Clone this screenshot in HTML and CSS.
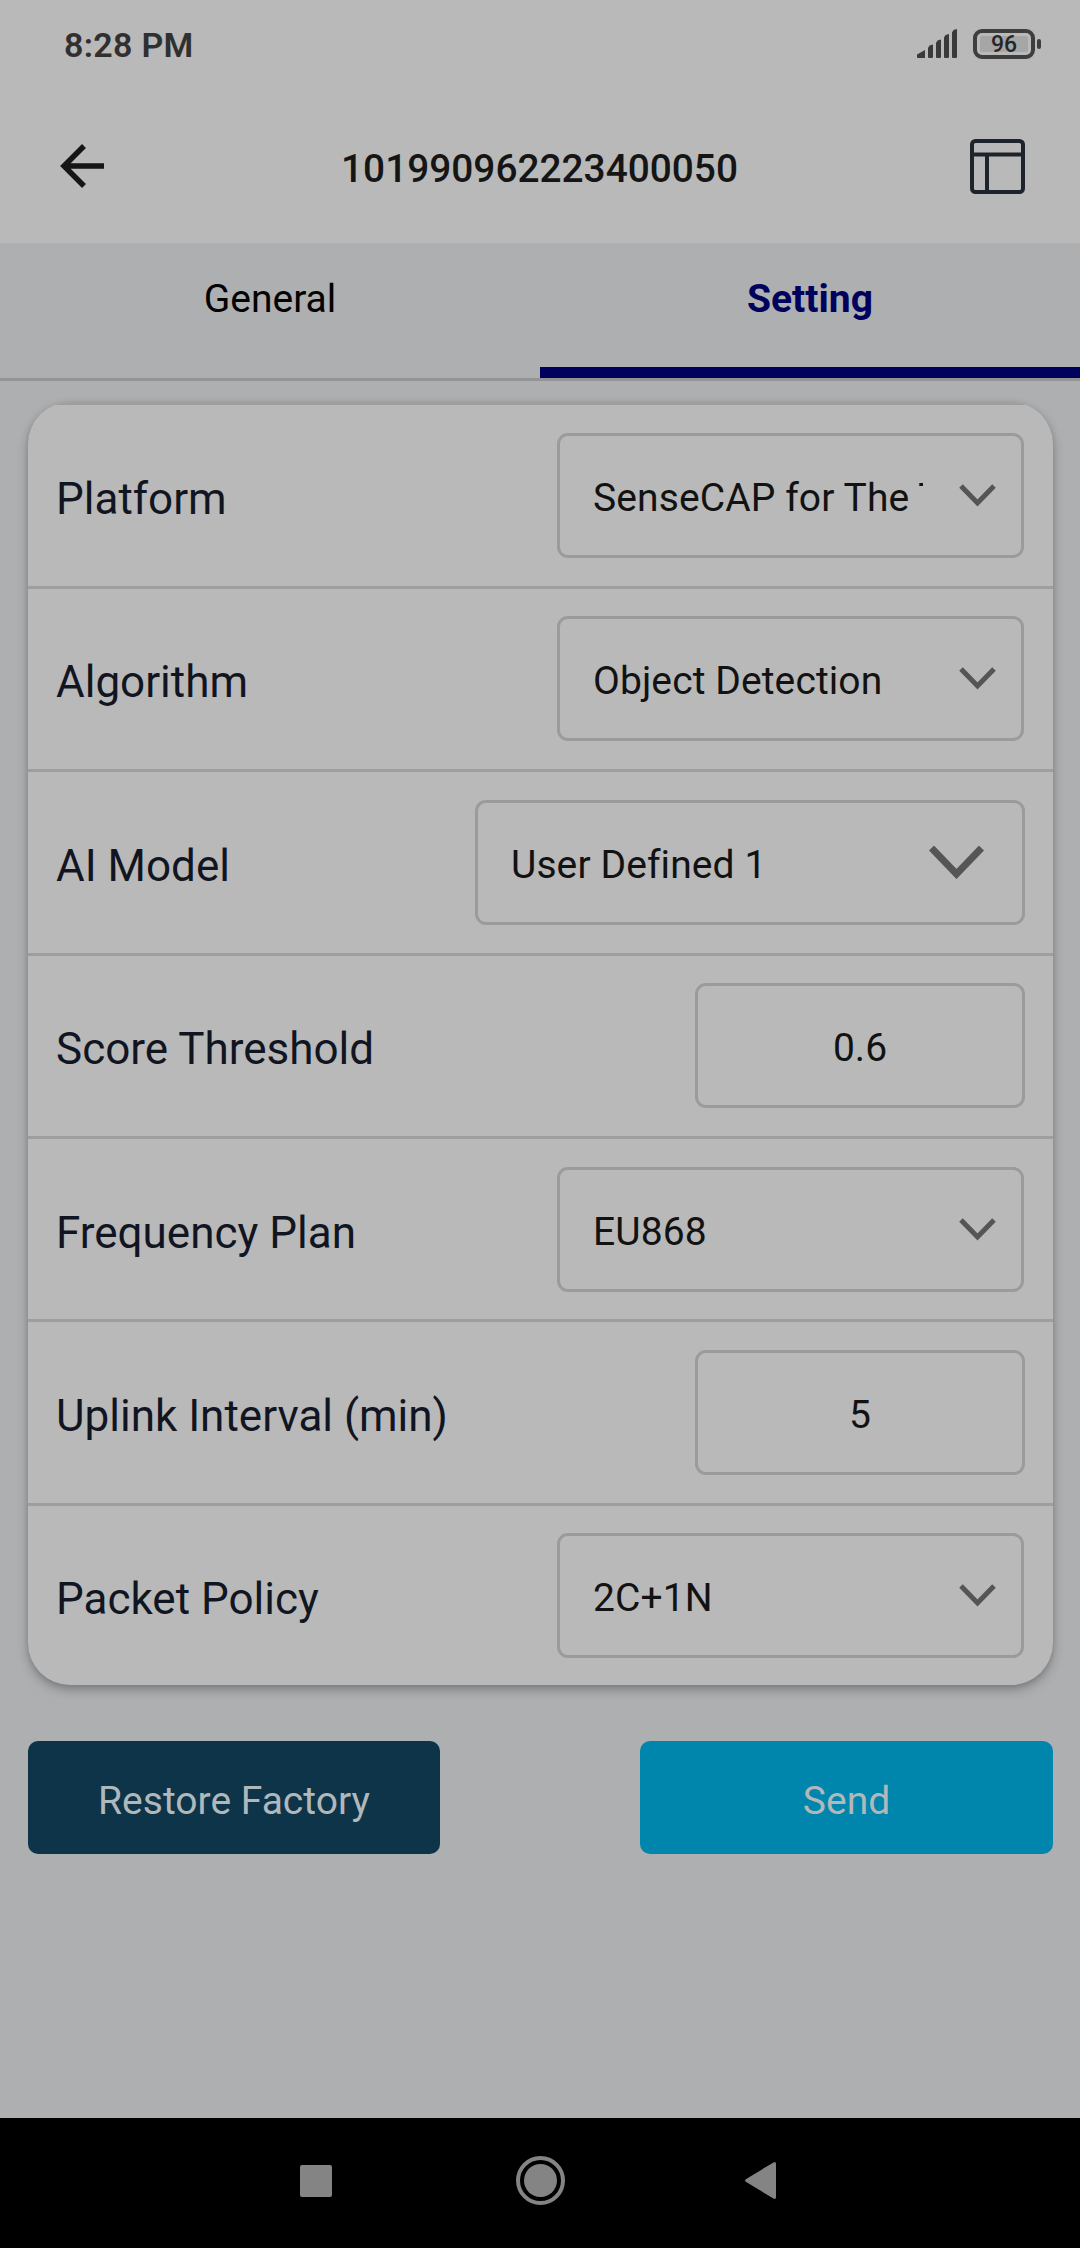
FILE: index.html
```html
<!DOCTYPE html>
<html lang="en">
<head>
<meta charset="utf-8">
<title>Device settings</title>
<link rel="stylesheet" href="styles.css">
</head>
<body>
<div class="status">
  <span class="clock">8:28 PM</span>
  <div class="status-icons">
    <svg width="40" height="30" viewBox="0 0 40 30" fill="#3a3a3a"><path d="M0 25.500 8 21v8H1a1 1 0 0 1-1-1zM11 19l1.500-2.500L16 15.500V28a1 1 0 0 1-1 1h-3a1 1 0 0 1-1-1zM19 14l1.500-2.500L24 10.500V28a1 1 0 0 1-1 1h-3a1 1 0 0 1-1-1zM27 8.500 28.500 6 32 5v23a1 1 0 0 1-1 1h-3a1 1 0 0 1-1-1zM35 3.500 36.500 1 40 0v28a1 1 0 0 1-1 1h-3a1 1 0 0 1-1-1z"/></svg>
    <div class="battery"><div class="cell"><span class="level">96</span></div><i class="nub"></i></div>
  </div>
</div>
<header class="header">
  <svg class="back" width="44" height="44" viewBox="0 0 44 44" fill="none" stroke="#151515" stroke-width="5.500"><path d="M24 2 4 22l20 20M4 22h40"/></svg>
  <h1 class="title">101990962223400050</h1>
  <svg class="layout-icon" width="55" height="55" viewBox="0 0 55 55" fill="none" stroke="#1e242c" stroke-width="4"><rect x="2" y="2" width="51" height="51" rx="3.500"/><path d="M2 15.500h51M17 15.500V53"/></svg>
</header>
<nav class="tabs">
  <div class="tab">General</div>
  <div class="tab active">Setting</div>
</nav>
<main class="content">
  <section class="card">
    <div class="row"><span class="label">Platform</span><div class="field select"><span class="value">SenseCAP for The Things Network</span><svg class="chevron" width="37" height="23" viewBox="0 0 37 23"><path d="M2 2 18.500 19 35 2"/></svg></div></div>
    <div class="row"><span class="label">Algorithm</span><div class="field select"><span class="value">Object Detection</span><svg class="chevron" width="37" height="23" viewBox="0 0 37 23"><path d="M2 2 18.500 19 35 2"/></svg></div></div>
    <div class="row"><span class="label">AI Model</span><div class="field select wide"><span class="value">User Defined 1</span><svg class="chevron large" width="55" height="33" viewBox="0 0 55 33"><path d="M2.500 2 27.500 28 52.500 2"/></svg></div></div>
    <div class="row"><span class="label">Score Threshold</span><div class="field number"><span class="value">0.6</span></div></div>
    <div class="row"><span class="label">Frequency Plan</span><div class="field select"><span class="value">EU868</span><svg class="chevron" width="37" height="23" viewBox="0 0 37 23"><path d="M2 2 18.500 19 35 2"/></svg></div></div>
    <div class="row"><span class="label">Uplink Interval (min)</span><div class="field number"><span class="value">5</span></div></div>
    <div class="row"><span class="label">Packet Policy</span><div class="field select"><span class="value">2C+1N</span><svg class="chevron" width="37" height="23" viewBox="0 0 37 23"><path d="M2 2 18.500 19 35 2"/></svg></div></div>
  </section>
  <div class="actions">
    <div class="button restore">Restore Factory</div>
    <div class="button send">Send</div>
  </div>
</main>
<footer class="navbar">
  <svg width="32" height="32" viewBox="0 0 32 32" fill="#848484"><rect width="32" height="32" rx="2"/></svg>
  <svg class="home" width="49" height="49" viewBox="0 0 49 49"><circle cx="24.500" cy="24.500" r="22.500" fill="none" stroke="#848484" stroke-width="4"/><circle cx="24.500" cy="24.500" r="16.500" fill="#848484"/></svg>
  <svg width="31" height="37" viewBox="0 0 31 37" fill="#848484"><path d="M.8 17.200 28.500.4Q31-.6 31 2v33q0 2.600-2.500 1.600L.8 19.800Q-.6 18.500.8 17.200z"/></svg>
</footer>
</body>
</html>
```
FILE: styles.css
```css
* { box-sizing: border-box; }
body {
  margin: 0;
  width: 1080px;
  height: 2248px;
  display: flex;
  flex-direction: column;
  overflow: hidden;
  background: #adafb1;
  font-family: Roboto, "Noto Sans", sans-serif;
  font-size: 39px;
  color: #121212;
}
svg { display: block; flex: none; }
.status {
  height: 95px;
  padding: 0 39px 0 64px;
  display: flex;
  justify-content: space-between;
  background: #b9b9b9;
}
.clock {
  font-size: 34px;
  font-weight: 600;
  line-height: 91px;
  color: #303030;
  letter-spacing: 0.3px;
}
.status-icons { display: flex; gap: 16px; padding-top: 29px; }
.battery { display: flex; align-items: center; gap: 2px; height: 30px; }
.cell {
  width: 62px;
  height: 30px;
  padding: 3px;
  border: 4px solid #3e3e3e;
  border-radius: 9px;
}
.level {
  display: block;
  height: 16px;
  border-radius: 2px;
  background: #a6a6a6;
  color: #262626;
  font-size: 23px;
  font-weight: 500;
  line-height: 18px;
  text-align: center;
}
.nub { width: 4px; height: 10px; border-radius: 2px; background: #3e3e3e; }
.header {
  height: 148px;
  padding: 0 55px 0 60px;
  display: flex;
  align-items: center;
  justify-content: space-between;
  background: #b9b9b9;
}
.back { margin: 0 5px 6px 0; }
.layout-icon { margin-bottom: 5px; }
.title { margin: 0 0 2px; font-size: 38.8px; font-weight: 500; color: #151515; }
.tabs {
  height: 138px;
  display: flex;
  border-bottom: 3px solid #949494;
}
.tab {
  flex: 1;
  padding-bottom: 13px;
  line-height: 112px;
  text-align: center;
  color: #020202;
}
.active { border-bottom: 11px solid #00005d; font-weight: 700; color: #00005d; }
.content { flex: 1; padding: 21.4px 27px 0 28px; }
.card {
  height: 1282.6px;
  border-radius: 42px;
  overflow: hidden;
  background: #b9b9b9;
  box-shadow: 0 5px 11px rgba(0, 0, 0, 0.26), 0 1px 5px rgba(0, 0, 0, 0.1);
}
.row {
  height: 183.4px;
  padding: 0 28px;
  display: flex;
  align-items: center;
  justify-content: space-between;
  border-top: 3px solid #9e9e9e;
}
.label { padding-top: 7px; font-size: 44px; color: #111522; }
.field {
  height: 125px;
  display: flex;
  align-items: center;
  border: 3px solid #9b9b9b;
  border-radius: 11px;
}
.select { width: 467px; padding: 0 25px 0 33px; justify-content: space-between; margin-right: 1px; }
.select .value { width: 330px; overflow: hidden; white-space: nowrap; letter-spacing: 0.1px; }
.wide { width: 550px; padding-right: 38px; margin-right: 0; }
.number { width: 330px; justify-content: center; }
.value { padding-top: 5px; }
.chevron { fill: none; stroke: #555; stroke-width: 5; }
.large { stroke-width: 7; margin-top: 1px; }
.actions { display: flex; justify-content: space-between; padding-top: 56px; }
.button {
  width: 412px;
  height: 113px;
  padding-top: 7px;
  display: flex;
  align-items: center;
  justify-content: center;
  border-radius: 10px;
  color: #b1b8bb;
}
.restore { background: #0d3448; }
.send { width: 413px; background: #0085ac; }
.navbar {
  height: 130px;
  padding: 0 304px 5px 300px;
  display: flex;
  align-items: center;
  justify-content: space-between;
  background: #000;
}
.home { margin-left: 4px; }
```
